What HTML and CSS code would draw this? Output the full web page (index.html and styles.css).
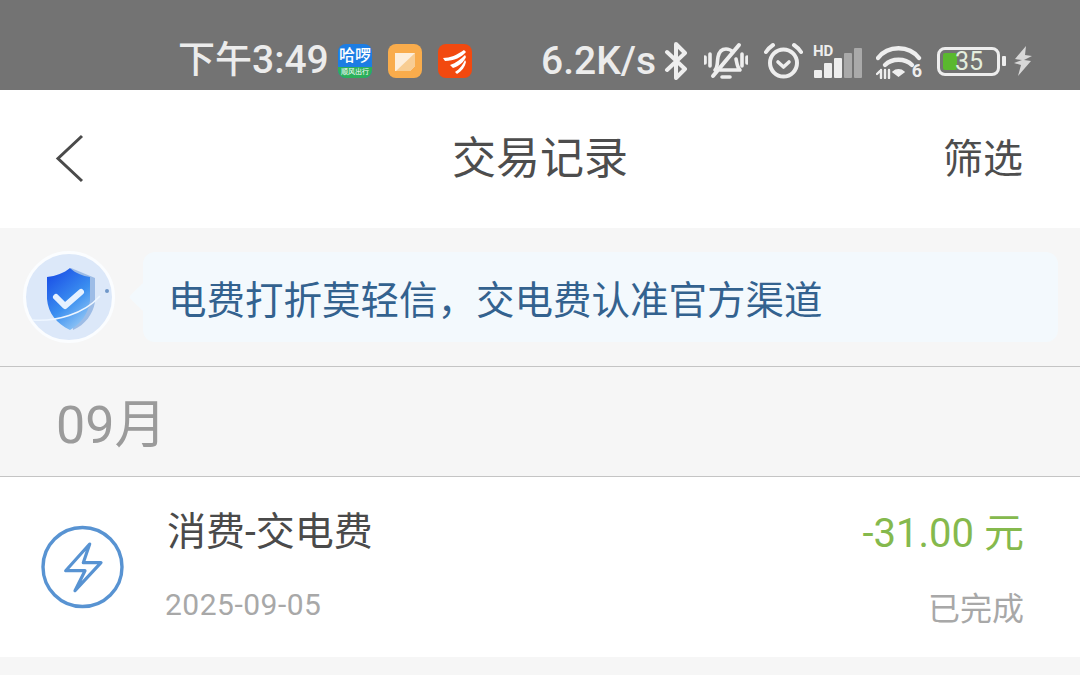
FILE: index.html
```html
<!DOCTYPE html>
<html lang="zh-CN">
<head>
  <meta charset="UTF-8" />
  <meta name="viewport" content="width=device-width, initial-scale=1.0"/>
  <title>交易记录</title>
  <link rel="stylesheet" href="styles.css">
</head>
<body>
  <div class="status-bar">
    <div class="status-left">
      <span class="clock">下午<span class="clock-num">3:49</span></span>
      <span class="app app-hello"><span class="hello-top">哈啰</span><span class="hello-bottom">顺风出行</span></span>
      <span class="app app-note">
        <svg viewBox="0 0 34 34" width="34" height="34"><path d="M7 9h20v13l-5 5H7z" fill="#fdeedb"/><path d="M8 27L27 9v13l-5 5z" fill="#f8cd93"/></svg>
      </span>
      <span class="app app-news">
        <svg viewBox="0 0 34 34" width="34" height="34" fill="#fff"><path d="M5 14c7 0 14-3 21-8l2 2c-4 5-12 9-21 9z"/><path d="M12 21c6-2 11-6 15-10l1 2c-2 5-7 9-13 11z"/><path d="M17 28c5-3 8-8 10-12l1 2c-1 5-4 9-9 12z"/></svg>
      </span>
    </div>
    <div class="status-right">
      <span class="speed">6.2K/s</span>
      <svg class="icon-bt" viewBox="0 0 24 38" width="24" height="38" fill="none" stroke="#eee" stroke-width="4" stroke-linejoin="round" stroke-linecap="round"><path d="M3 10l18 17-9 9V2l9 9L3 28"/></svg>
      <svg class="icon-mute" viewBox="0 0 44 38" width="44" height="38" fill="none" stroke="#eee" stroke-width="3.600" stroke-linecap="round" stroke-linejoin="round">
        <path d="M11 28c3-3 2-8 3-13 1-5 4-8 8-8 3 0 5 1 7 3M32 17c1 4 1 8 4 11H16"/>
        <path d="M9 34L35 3" stroke-width="4"/>
        <path d="M18 35h8M1 15v6M6 12v12M38 12v12M43 15v6"/>
      </svg>
      <svg class="icon-alarm" viewBox="0 0 39 38" width="39" height="38" fill="none" stroke="#eee" stroke-linecap="round" stroke-linejoin="round"><circle cx="19.500" cy="21" r="13.500" stroke-width="4"/><path d="M14 20l5.500 5 5.500-5" stroke-width="3.600"/><path d="M2 10c2-3 4-5 7-7M37 10c-2-3-4-5-7-7" stroke-width="4"/></svg>
      <span class="signal">
        <span class="hd">HD</span>
        <span class="bars"><i class="b1"></i><i class="b2"></i><i class="b3"></i><i class="b4 off"></i><i class="b5 off"></i></span>
      </span>
      <span class="wifi">
        <svg viewBox="0 0 46 34" width="46" height="34" fill="none" stroke="#eee" stroke-linecap="round">
          <path d="M2 13C12 0 33 0 43 13" stroke-width="4.400"/><path d="M9 20c7-7 20-7 27 0" stroke-width="4.400"/>
          <path d="M17 27c3-3 8-3 11 0l-5.500 4z" fill="#eee" stroke-width="1.500"/>
          <path d="M5 25v8M1 29l3-3M9 25v8M13 25v8" stroke-width="2.400"/>
        </svg>
        <span class="wifi-six">6</span>
      </span>
      <span class="battery"><span class="battery-body"><span class="battery-fill"></span><span class="battery-num">35</span></span><span class="battery-cap"></span></span>
      <svg class="icon-charge" viewBox="0 0 19 30" width="19" height="30" fill="#d8d8d8"><path d="M13 0L2 13l7 1-8 3 7 2-3 11L18 15l-7-1 8-4-7-1z"/></svg>
    </div>
  </div>

  <div class="nav-bar">
    <svg class="back" viewBox="0 0 30 50" width="30" height="50" fill="none" stroke="#4a4a4a" stroke-width="3"><path d="M27 2L3 24.500 27 47"/></svg>
    <div class="nav-title">交易记录</div>
    <div class="nav-action">筛选</div>
  </div>

  <div class="notice">
    <div class="notice-avatar">
      <svg viewBox="0 0 90 90" width="90" height="90">
        <defs>
          <linearGradient id="shield" x1="0.2" y1="0" x2="0.8" y2="1"><stop offset="0" stop-color="#1a4fe6"/><stop offset="0.55" stop-color="#3b8ff0"/><stop offset="1" stop-color="#9ccdf6"/></linearGradient>
        </defs>
        <path d="M47 16l24 10v24c-2 12-10 23-22 28z" fill="#9dbce6"/>
        <path d="M46 16c5 5 13 8 20 9v24c-2 13-9 23-20 29-13-6-22-17-23-31V25c9-1 17-4 23-9z" fill="url(#shield)"/>
        <path d="M32 45l9 9 16-14" fill="none" stroke="#e6f1ff" stroke-width="6" stroke-linecap="round" stroke-linejoin="round"/>
        <path d="M8 68c24 2 52-6 68-24" fill="none" stroke="#eef6ff" stroke-width="1.500"/>
        <circle cx="83" cy="39" r="2" fill="#6f97c9"/>
      </svg>
    </div>
    <div class="notice-bubble">电费打折莫轻信，交电费认准官方渠道</div>
  </div>

  <div class="month">09月</div>

  <div class="record">
    <svg class="record-icon" viewBox="0 0 84 84" width="84" height="84" fill="none" stroke="#5893d2">
      <circle cx="42.500" cy="42" r="39.500" stroke-width="3.400"/>
      <path d="M49.700 19L25.700 45.700H45L35 65.700 61 37.700H43.300z" stroke-width="3.200" stroke-linejoin="round"/>
    </svg>
    <div class="record-main">
      <div class="record-title">消费-交电费</div>
      <div class="record-date">2025-09-05</div>
    </div>
    <div class="record-side">
      <div class="record-amount">-31.00 元</div>
      <div class="record-state">已完成</div>
    </div>
  </div>
</body>
</html>
```

FILE: styles.css
```css
html, body { height: 100%; }
body { margin: 0; background: #f6f6f6; color: #4a4a4a; font-family: Roboto, "Noto Sans CJK SC", sans-serif; overflow: hidden; }

.status-bar { height: 90px; background: #737373; display: flex; justify-content: space-between; align-items: flex-end; padding: 0 48px 6px 178px; box-sizing: border-box; color: #eee; }
.status-left, .status-right { display: flex; align-items: center; height: 46px; }
.clock { font-size: 37px; line-height: 40px; font-weight: 500; width: 160px; white-space: nowrap; color: #ececec; margin-top: -2px; }
.clock-num { font-size: 39px; }
.app { width: 34px; height: 34px; border-radius: 8px; margin-right: 16px; overflow: hidden; display: flex; flex-direction: column; }
.app-hello { background: #1d7de3; color: #fff; text-align: center; }
.hello-top { font-size: 16px; line-height: 23px; font-weight: 500; white-space: nowrap; }
.hello-bottom { font-size: 7px; line-height: 11px; background: #2cb05a; white-space: nowrap; }
.app-note { background: #f9ac4c; }
.app-news { background: #f2490f; }

.speed { font-size: 39px; line-height: 40px; font-weight: 500; width: 123px; white-space: nowrap; color: #ececec; }
.icon-bt { margin-right: 16px; }
.icon-mute { margin-right: 16px; }
.icon-alarm { margin-right: 11px; }
.signal { width: 49px; height: 38px; display: flex; flex-direction: column; justify-content: space-between; margin-right: 13px; position: relative; }
.hd { position: absolute; left: -1px; top: 2px; font-size: 15px; line-height: 15px; font-weight: 700; color: #eee; }
.bars { display: flex; align-items: flex-end; gap: 2px; height: 30px; margin-top: 6px; }
.bars i { width: 8px; background: #eee; display: block; border-radius: 1px; }
.bars .off { background: #a9a9a9; }
.b1 { height: 8px; } .b2 { height: 15px; } .b3 { height: 20px; } .b4 { height: 25px; } .b5 { height: 30px; }
.wifi { position: relative; width: 46px; height: 34px; margin-right: 15px; top: 1px; }
.wifi svg { display: block; }
.wifi-six { position: absolute; right: 0; bottom: -1px; font-size: 18px; font-weight: 700; line-height: 18px; color: #eee; }
.battery { display: flex; align-items: center; margin-right: 7px; }
.battery-body { width: 63px; height: 29px; box-sizing: border-box; border: 3px solid #eee; border-radius: 8px; position: relative; display: block; }
.battery-fill { position: absolute; left: 3px; top: 3px; bottom: 3px; width: 14px; background: #5ab82e; border-radius: 2px; }
.battery-num { position: absolute; left: 15px; top: -3px; font-size: 25px; line-height: 29px; color: #e4eedd; }
.battery-cap { width: 4px; height: 10px; margin-left: 2px; background: #eee; border-radius: 1px; }

.nav-bar { height: 138px; background: #fff; display: flex; align-items: center; justify-content: space-between; padding: 0 57px 0 55px; position: relative; }
.nav-title { position: absolute; left: 0; right: 0; top: 39px; line-height: 60px; text-align: center; font-size: 44px; color: #4d4d4d; }
.nav-action { font-size: 40px; line-height: 60px; margin-top: 2px; color: #4d4d4d; }
.back { flex: none; }

.notice { height: 139px; box-sizing: border-box; border-bottom: 1px solid #c4c4c4; display: flex; align-items: center; padding: 0 22px 0 23px; }
.notice-avatar { width: 92px; height: 92px; border-radius: 50%; box-sizing: border-box; border: 3px solid #fbfdff; background: #dce8f9; overflow: hidden; flex: none; }
.notice-avatar svg { display: block; margin: -2px; }
.notice-bubble { flex: 1; height: 90px; margin-left: 28px; background: #f3f9fd; border-radius: 12px; display: flex; align-items: center; padding-left: 25px; font-size: 38.5px; white-space: nowrap; color: #33628f; position: relative; }
.notice-bubble::before { content: ""; position: absolute; left: -10px; top: 35px; width: 20px; height: 20px; background: #f3f9fd; transform: rotate(45deg); border-radius: 2px; }

.month { height: 110px; box-sizing: border-box; border-bottom: 1px solid #c4c4c4; padding: 0 0 2px 56px; display: flex; align-items: center; font-size: 52px; color: #9b9b9b; }

.record { height: 180px; box-sizing: border-box; background: #fff; display: flex; align-items: center; padding: 0 56px 0 40px; }
.record-icon { flex: none; }
.record-main { flex: 1; margin-left: 43px; padding-bottom: 6px; display: flex; flex-direction: column; }
.record-title { font-size: 39px; line-height: 54px; color: #4a4a4a; white-space: nowrap; }
.record-date { font-size: 30px; letter-spacing: 0.5px; line-height: 36px; margin-top: 28px; margin-left: -2px; color: #a8a8a8; }
.record-side { display: flex; flex-direction: column; align-items: flex-end; }
.record-amount { font-size: 40px; line-height: 54px; color: #85b94d; white-space: nowrap; }
.record-state { font-size: 32px; line-height: 38px; margin-top: 29px; color: #a8a8a8; }
```
